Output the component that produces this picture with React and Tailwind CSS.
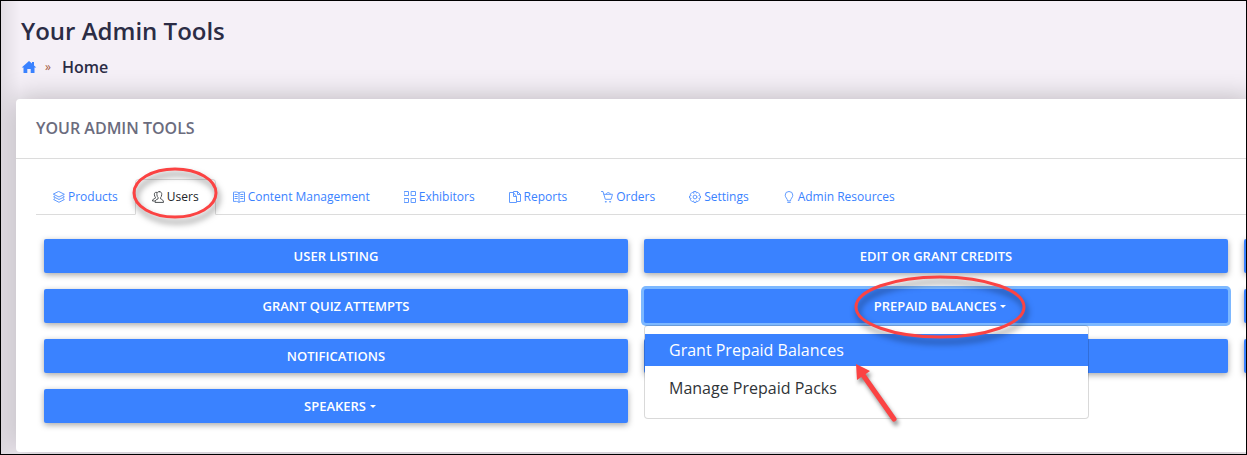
const stroke = {
  fill: "none",
  stroke: "currentColor",
  strokeWidth: 1,
  strokeLinejoin: "round",
  strokeLinecap: "round",
};

const Icon = ({ children }) => (
  <svg className="w-3 h-3 shrink-0 opacity-80" viewBox="0 0 12 12" aria-hidden="true" {...stroke}>
    {children}
  </svg>
);

const tabs = [
  {
    name: "Products",
    icon: (
      <Icon>
        <path d="M6 .6 11.4 3.3 6 6 .6 3.3z" />
        <path d="M1.8 5.1.6 5.8 6 8.5l5.4-2.7-1.2-.7" />
        <path d="M1.8 7.7.6 8.5 6 11.3l5.4-2.8-1.2-.8" />
      </Icon>
    ),
  },
  {
    name: "Users",
    active: true,
    icon: (
      <Icon>
        <path d="M4.6 1.3C2.7 1 2.2 2.3 2.4 3.8c.1 1.2.5 2 1 2.4v1C1.6 8 .5 8.3.5 10h2" />
        <path d="M7.3.6C5.4.6 4.7 1.9 4.9 3.7c.1 1.4.6 2.4 1.2 2.9v1.2C4.3 8.7 3 9.1 3 11.4h8.5c0-2.3-1.2-2.7-2.9-3.6V6.6c.6-.5 1-1.5 1.1-2.9.2-1.9-.6-3.1-2.4-3.1z" />
      </Icon>
    ),
  },
  {
    name: "Content Management",
    icon: (
      <Icon>
        <path d="M6 2C4.5.9 2.5.8.5 1.2v9.3c2-.3 4-.2 5.500.8 1.500-1 3.500-1.100 5.500-.8V1.200C9.500.8 7.500.9 6 2z" />
        <path d="M6 2v9.300M2 3.500h2.300M2 5.500h2.300M2 7.500h2.300M7.700 3.500H10M7.700 5.500H10M7.700 7.500H10" />
      </Icon>
    ),
  },
  {
    name: "Exhibitors",
    icon: (
      <Icon>
        <path d="M.5.5h4v4h-4zM7.5.5h4v4h-4zM.5 7.5h4v4h-4zM7.5 7.5h4v4h-4z" />
      </Icon>
    ),
  },
  {
    name: "Reports",
    icon: (
      <Icon>
        <path d="M3.5 1.5h-3v10h7v-6l-3-4h-1z" />
        <path d="M4.5 1.5v4h3M4.5 1.5v-1h4l3 3v7h-4M8.5.5v3h3" />
      </Icon>
    ),
  },
  {
    name: "Orders",
    icon: (
      <Icon>
        <path d="M.5.5H2l2.3 7.800h5.800l1.400-5H3M5 3.300C5.500.9 9 .9 9.500 3.300" />
        <path d="M4.700 10.500h.6v.6h-.6zM9 10.500h.6v.6H9z" />
      </Icon>
    ),
  },
  {
    name: "Settings",
    icon: (
      <Icon>
        <path d="M5 .5h2l.4 1.600 1.400-.8 1.900 1.900-.8 1.400 1.600.4v2l-1.600.4.8 1.400-1.900 1.900-1.400-.8-.4 1.600H5l-.4-1.600-1.400.8-1.900-1.900.8-1.400L.5 7V5l1.600-.4-.8-1.400 1.900-1.900 1.400.8z" />
        <circle cx="6" cy="6" r="1.9" />
      </Icon>
    ),
  },
  {
    name: "Admin Resources",
    icon: (
      <Icon>
        <path d="M4.5 9.5C4.5 7.5 2.2 6.6 2.2 4.2a3.8 3.7 0 0 1 7.6 0c0 2.4-2.300 3.300-2.300 5.300zM4.700 11.400h2.600" />
      </Icon>
    ),
  },
];

const buttonStyle =
  "h-[34px] w-full rounded-xs bg-[#3a82ff] pt-0.5 text-[13px] font-semibold text-white uppercase flex items-center justify-center cursor-pointer";

const Caret = () => (
  <span className="ml-1 mb-0.5 border-x-[3px] border-t-[3px] border-x-transparent border-t-white" />
);

const ToolButton = ({ label, caret }) => (
  <button
    type="button"
    className={`${buttonStyle} shadow-[0_2px_6px_rgba(0,0,0,0.35)] ${caret ? "pl-2" : ""}`}
  >
    {label}
    {caret && <Caret />}
  </button>
);

const Highlight = ({ className, rx, ry }) => (
  <svg
    className={`absolute z-20 pointer-events-none overflow-visible drop-shadow-[2px_5px_3px_rgba(0,0,0,0.5)] ${className}`}
    aria-hidden="true"
  >
    <ellipse cx="50%" cy="50%" rx={rx} ry={ry} fill="none" stroke="#fb4343" strokeWidth="3" />
  </svg>
);

const PrepaidMenu = () => (
  <div className="relative z-10">
    <button
      type="button"
      aria-expanded="true"
      className={`${buttonStyle} pl-2 ring-3 ring-[#7db8ff]`}
    >
      <span className="relative flex items-center">
        Prepaid Balances
        <Caret />
        <Highlight
          className="left-1/2 top-1/2 -translate-x-1/2 -translate-y-1/2 w-[170px] h-[62px]"
          rx="84"
          ry="30"
        />
      </span>
    </button>
    <div className="absolute left-0 top-9 w-[445px] rounded border border-black/15 bg-white bg-clip-padding pt-2 pb-2 text-base">
      <a href="#grant" className="block h-8 mb-1.5 px-6 leading-8 bg-[#3a82ff] text-white">
        Grant Prepaid Balances
      </a>
      <a href="#manage" className="block h-8 mb-1.5 px-6 leading-8 text-[#303438]">
        Manage Prepaid Packs
      </a>
      <svg
        className="absolute left-[208px] top-[36px] w-12 h-16 overflow-visible pointer-events-none drop-shadow-[2px_4px_2px_rgba(0,0,0,0.45)]"
        viewBox="0 0 48 64"
        aria-hidden="true"
      >
        <path d="M10 13 41 57" stroke="#fb4343" strokeWidth="5" strokeLinecap="round" />
        <path d="M3 2 4 18 17 9z" fill="#fb4343" />
      </svg>
    </div>
  </div>
);

const App = () => {
  return (
    <div className="border border-black bg-[#f5f0f7] overflow-hidden font-['Open_Sans',sans-serif]">
      <div className="bg-linear-to-r from-black/8 to-transparent to-[20px] pb-0.5">
        <header className="px-5 pt-3 pb-5 text-[#2b2c45]">
          <h1 className="text-2xl leading-9 font-semibold">Your Admin Tools</h1>
          <nav aria-label="Breadcrumb" className="mt-1.5 flex items-center text-base leading-6 font-semibold">
            <a href="#home" aria-label="Home" className="text-[#3a82ff]">
              <svg className="w-4 h-4" viewBox="0 0 16 16" fill="currentColor" aria-hidden="true">
                <path d="M8 2 11 4.6V3h2v3.4L15.3 8.6h-1.8V14H9.700v-4H6.300v4H2.500V8.600H.7z" />
              </svg>
            </a>
            <span className="ml-2 text-xs leading-6 font-normal text-[#a4583c]">»</span>
            <span className="ml-[11px]">Home</span>
          </nav>
        </header>

        <main className="ml-[15px] -mr-2 rounded bg-white pb-[29px] shadow-[0_0_28px_rgba(0,0,0,0.25)]">
          <h2 className="h-[60px] px-5 pb-0.5 flex items-center border-b border-[#dcdcdc] text-base font-semibold text-[#6b6c7e] uppercase">
            Your Admin Tools
          </h2>

          <div role="tablist" className="ml-5 mt-5 flex border-b border-[#dcdcdc] text-xs">
            {tabs.map((tab) => (
              <button
                key={tab.name}
                type="button"
                role="tab"
                aria-selected={!!tab.active}
                className={`relative flex items-center gap-[3px] h-9 px-4 -mb-px border rounded-t cursor-pointer ${
                  tab.active
                    ? "border-[#dcdcdc] border-b-white bg-white text-[#212529]"
                    : "border-transparent text-[#3a82ff]"
                }`}
              >
                {tab.icon}
                {tab.name}
                {tab.active && (
                  <Highlight className="-left-[3px] -top-3 w-[84px] h-[50px]" rx="41" ry="24" />
                )}
              </button>
            ))}
          </div>

          <div className="ml-7 mr-2 mt-6 grid grid-flow-col grid-rows-4 auto-cols-[calc(50%-17px)] gap-4">
            <ToolButton label="User Listing" />
            <ToolButton label="Grant Quiz Attempts" />
            <ToolButton label="Notifications" />
            <ToolButton label="Speakers" caret />
            <ToolButton label="Edit or Grant Credits" />
            <PrepaidMenu />
            <ToolButton />
            <div />
            <ToolButton />
            <ToolButton />
            <ToolButton />
          </div>
        </main>
      </div>
    </div>
  );
};

export default App;
